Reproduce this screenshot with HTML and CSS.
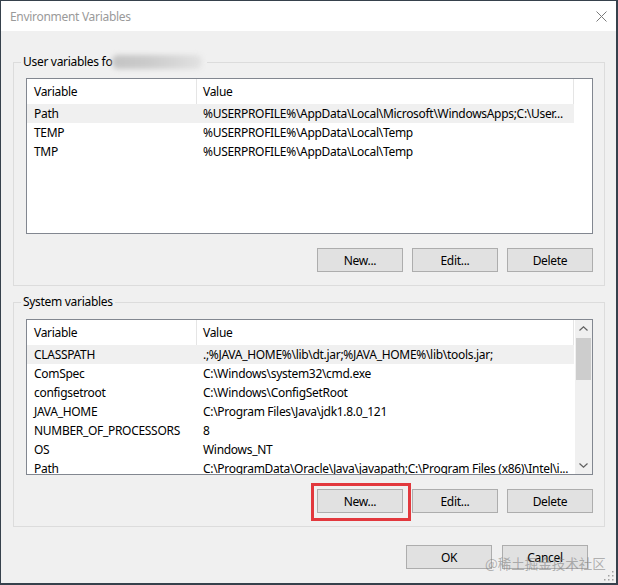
FILE: index.html
```html
<!DOCTYPE html>
<html>
<head>
<meta charset="utf-8">
<title>Environment Variables</title>
<link rel="stylesheet" href="styles.css">
</head>
<body>
<div class="window">
  <div class="titlebar">
    <span class="title">Environment Variables</span>
    <svg class="close" width="11" height="11" viewBox="0 0 11 11"><path d="M0.5 0.5 L10.5 10.5 M10.5 0.5 L0.5 10.5" stroke="#7a7a7a" stroke-width="1" fill="none"/></svg>
  </div>
  <div class="content">
    <fieldset class="group">
      <legend class="group-label">User variables fo<span class="redacted"></span></legend>
      <div class="listbox">
        <div class="list-main">
          <div class="row header"><div class="cell c1">Variable</div><div class="cell c2">Value</div></div>
          <div class="row selected"><div class="cell c1">Path</div><div class="cell c2">%USERPROFILE%\AppData\Local\Microsoft\WindowsApps;C:\User...</div></div>
          <div class="row"><div class="cell c1">TEMP</div><div class="cell c2">%USERPROFILE%\AppData\Local\Temp</div></div>
          <div class="row"><div class="cell c1">TMP</div><div class="cell c2">%USERPROFILE%\AppData\Local\Temp</div></div>
        </div>
      </div>
      <div class="buttons">
        <div class="btn">New...</div>
        <div class="btn">Edit...</div>
        <div class="btn">Delete</div>
      </div>
    </fieldset>
    <fieldset class="group system">
      <legend class="group-label">System variables</legend>
      <div class="listbox">
        <div class="list-main">
          <div class="row header"><div class="cell c1">Variable</div><div class="cell c2">Value</div></div>
          <div class="row selected"><div class="cell c1">CLASSPATH</div><div class="cell c2">.;%JAVA_HOME%\lib\dt.jar;%JAVA_HOME%\lib\tools.jar;</div></div>
          <div class="row"><div class="cell c1">ComSpec</div><div class="cell c2">C:\Windows\system32\cmd.exe</div></div>
          <div class="row"><div class="cell c1">configsetroot</div><div class="cell c2">C:\Windows\ConfigSetRoot</div></div>
          <div class="row"><div class="cell c1">JAVA_HOME</div><div class="cell c2">C:\Program Files\Java\jdk1.8.0_121</div></div>
          <div class="row"><div class="cell c1">NUMBER_OF_PROCESSORS</div><div class="cell c2">8</div></div>
          <div class="row"><div class="cell c1">OS</div><div class="cell c2">Windows_NT</div></div>
          <div class="row"><div class="cell c1">Path</div><div class="cell c2">C:\ProgramData\Oracle\Java\javapath;C:\Program Files (x86)\Intel\i...</div></div>
        </div>
        <div class="scrollbar">
          <div class="sb-btn"><svg width="9" height="5" viewBox="0 0 9 5"><polyline points="0.5,4.5 4.5,0.8 8.5,4.5" stroke="#606060" stroke-width="1.2" fill="none"/></svg></div>
          <div class="sb-thumb"></div>
          <div class="sb-track"></div>
          <div class="sb-btn"><svg width="9" height="5" viewBox="0 0 9 5"><polyline points="0.5,0.5 4.5,4.2 8.5,0.5" stroke="#606060" stroke-width="1.2" fill="none"/></svg></div>
        </div>
      </div>
      <div class="buttons">
        <div class="btn highlighted">New...</div>
        <div class="btn">Edit...</div>
        <div class="btn">Delete</div>
      </div>
    </fieldset>
    <div class="dialog-buttons">
      <div class="btn">OK</div>
      <div class="btn">Cancel</div>
    </div>
  </div>
  <div class="watermark">@稀土掘金技术社区</div>
  <svg class="grip" width="10" height="10" viewBox="0 0 10 10">
    <rect x="8" y="0" width="1.5" height="1.5" fill="#a0a0a0"/>
    <rect x="8" y="4" width="1.5" height="1.5" fill="#a0a0a0"/>
    <rect x="4" y="4" width="1.5" height="1.5" fill="#a0a0a0"/>
    <rect x="8" y="8" width="1.5" height="1.5" fill="#a0a0a0"/>
    <rect x="4" y="8" width="1.5" height="1.5" fill="#a0a0a0"/>
    <rect x="0" y="8" width="1.5" height="1.5" fill="#a0a0a0"/>
  </svg>
</div>
</body>
</html>
```

FILE: styles.css
```css
html, body {
  margin: 0;
  padding: 0;
}
body {
  background: #36414c;
  width: 618px;
  height: 585px;
  overflow: hidden;
  font-family: "Noto Sans", "Open Sans", sans-serif;
  font-size: 12px;
  letter-spacing: -0.3px;
  color: #000;
}
.window {
  position: relative;
  margin: 1px 0 0 1px;
  width: 615px;
  height: 582px;
  background: #f0f0f0;
  display: flex;
  flex-direction: column;
}
.titlebar {
  height: 30px;
  flex: none;
  background: #fff;
  display: flex;
  align-items: center;
  justify-content: space-between;
  padding: 1px 9px 0 9px;
  box-sizing: border-box;
}
.title {
  color: #9a9a9a;
  font-size: 12px;
  line-height: 16px;
}
.close {
  display: block;
}
.content {
  padding: 0 11px 0 12px;
  display: flex;
  flex-direction: column;
}
.group {
  margin: 23px 0 0 0;
  border: 1px solid #dcdcdc;
  padding: 8px 11px 13px 12px;
  min-width: 0;
}
.group.system {
  margin-top: 8px;
  padding-top: 9px;
}
.group-label {
  margin-left: -5px;
  padding: 0 2px;
  line-height: 16px;
  display: flex;
  align-items: center;
}
.redacted {
  display: inline-block;
  width: 90px;
  height: 14px;
  margin-right: 3px;
  background: linear-gradient(90deg, #c4c4c4 0%, #cbcbcb 40%, #d6d6d6 70%, #e2e2e2 100%);
  filter: blur(2.5px);
  border-radius: 6px;
}
.listbox {
  height: 156px;
  box-sizing: border-box;
  border: 1px solid #828790;
  background: #fff;
  display: flex;
  overflow: hidden;
}
.list-main {
  flex: 1;
  min-width: 0;
}
.row {
  width: 547px;
  height: 19px;
  display: flex;
  align-items: center;
  white-space: nowrap;
}
.row.header {
  height: 25px;
}
.row.selected {
  background: #f0f0f0;
}
.cell {
  box-sizing: border-box;
  overflow: hidden;
  height: 100%;
  display: flex;
  align-items: center;
}
.c1 {
  width: 170px;
  padding-left: 7px;
}
.c2 {
  width: 377px;
  padding-left: 6px;
}
.header .cell {
  border-right: 1px solid #e5e5e5;
}
.scrollbar {
  width: 17px;
  flex: none;
  background: #f0f0f0;
  display: flex;
  flex-direction: column;
}
.sb-btn {
  height: 17px;
  flex: none;
  display: flex;
  align-items: center;
  justify-content: center;
}
.sb-thumb {
  height: 42px;
  margin: 1px 1px 0 1px;
  background: #cdcdcd;
}
.sb-track {
  flex: 1;
}
.buttons {
  margin-top: 14px;
  display: flex;
  justify-content: flex-end;
  gap: 9px;
}
.btn {
  position: relative;
  width: 86px;
  height: 24px;
  box-sizing: border-box;
  border: 1px solid #adadad;
  background: #e1e1e1;
  display: flex;
  align-items: center;
  justify-content: center;
}
.btn.highlighted::after {
  content: "";
  position: absolute;
  top: -7px;
  left: -7px;
  right: -9px;
  bottom: -9px;
  border: 3px solid #e2383d;
}
.dialog-buttons {
  margin-top: 18px;
  padding-right: 17px;
  display: flex;
  justify-content: flex-end;
  gap: 10px;
}
.watermark {
  position: absolute;
  left: 484px;
  top: 552px;
  white-space: nowrap;
  font-family: "Noto Sans CJK SC", sans-serif;
  font-size: 13.5px;
  line-height: 20px;
  letter-spacing: 0;
  color: rgba(120, 120, 120, 0.55);
}
.grip {
  position: absolute;
  right: 2px;
  bottom: 2px;
}
```
